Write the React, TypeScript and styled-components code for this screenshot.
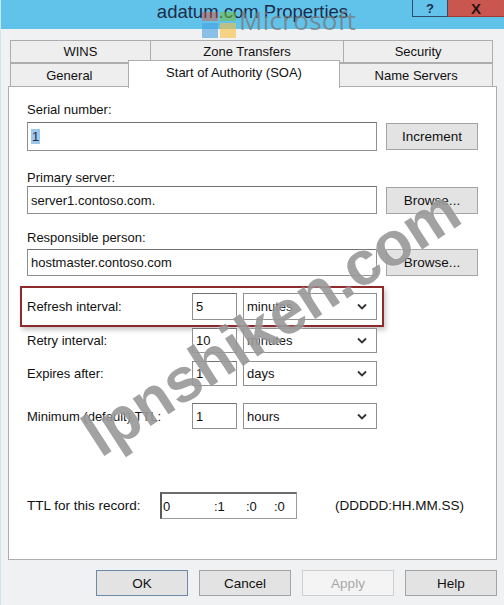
import React from "react";
import styled, { createGlobalStyle } from "styled-components";

const GlobalStyle = createGlobalStyle`
  html, body {
    margin: 0;
    padding: 0;
    background: #eff1f3;
  }
  body {
    font-family: "Liberation Sans", Arial, sans-serif;
    font-size: 13px;
    color: #111;
  }
`;

const Window = styled.div`
  position: relative;
  width: 504px;
  height: 605px;
  overflow: hidden;
  background: #eff1f3;
  border-left: 1px solid #cfe6f2;
  box-sizing: border-box;
`;

const TitleBar = styled.div`
  display: grid;
  grid-template-columns: 1fr auto 1fr;
  height: 29px;
  background: #62c3ea;
`;

const Title = styled.div`
  grid-column: 2;
  padding-top: 1px;
  font-size: 18.5px;
  line-height: 22px;
  color: #1c2d4a;
  white-space: nowrap;
`;

const Caption = styled.div`
  grid-column: 3;
  justify-self: end;
  display: flex;
  height: 17px;
`;

const CaptionButton = styled.div<{ $close?: boolean }>`
  width: ${(p) => (p.$close ? 56 : 34)}px;
  display: flex;
  align-items: center;
  justify-content: center;
  background: ${(p) => (p.$close ? "#c9574f" : "#63c3ea")};
  border-left: 1px solid #2d4d6f;
  border-bottom: 1px solid ${(p) => (p.$close ? "#9c3b35" : "#2d4d6f")};
  font-weight: bold;
  font-size: ${(p) => (p.$close ? 15 : 13)}px;
  color: ${(p) => (p.$close ? "#2a1212" : "#1c2d4a")};
  line-height: 1;
`;

const Body = styled.div`
  display: flex;
  flex-direction: column;
  padding: 11px 0 0 7px;
`;

const TabStrip = styled.div`
  display: flex;
  flex-direction: column;
  margin-left: 2px;
  width: 483px;
`;

const TabRow = styled.div<{ $h: number }>`
  display: flex;
  height: ${(p) => p.$h}px;
`;

const Tab = styled.div<{ $w: number; $active?: boolean }>`
  position: relative;
  z-index: ${(p) => (p.$active ? 2 : 1)};
  box-sizing: border-box;
  width: ${(p) => p.$w}px;
  height: ${(p) => (p.$active ? "calc(100% + 4px)" : "100%")};
  margin-top: ${(p) => (p.$active ? -3 : 0)}px;
  margin-left: -1px;
  display: flex;
  align-items: center;
  justify-content: center;
  padding-bottom: ${(p) => (p.$active ? 5 : 0)}px;
  border: 1px solid #adadad;
  border-bottom: ${(p) => (p.$active ? "none" : "1px solid #adadad")};
  background: ${(p) => (p.$active ? "#ffffff" : "#eeeeee")};
  font-size: 13px;
  color: #111;
  &:first-child {
    margin-left: 0;
  }
`;

const Panel = styled.div`
  box-sizing: border-box;
  width: 489px;
  height: 474px;
  margin-top: -1px;
  background: #ffffff;
  border: 1px solid #adadad;
  display: flex;
  flex-direction: column;
  padding: 14px 0 0 18px;
`;

const Label = styled.div<{ $mt?: number }>`
  margin-top: ${(p) => p.$mt ?? 0}px;
  line-height: 17px;
  height: 17px;
`;

const FieldRow = styled.div<{ $mt?: number }>`
  display: flex;
  align-items: center;
  gap: 9px;
  margin-top: ${(p) => p.$mt ?? 0}px;
`;

const TextBox = styled.div<{ $w: number; $h: number }>`
  box-sizing: border-box;
  width: ${(p) => p.$w}px;
  height: ${(p) => p.$h}px;
  display: flex;
  align-items: center;
  padding-left: 3px;
  background: #fff;
  border: 1px solid #8f8f8f;
  border-top-color: #707070;
  white-space: nowrap;
`;

const Selected = styled.span`
  background: #9ec8ea;
  color: #1a2c4a;
  padding: 0 1px;
`;

const Button = styled.div<{ $w: number; $h: number; $default?: boolean; $disabled?: boolean }>`
  box-sizing: border-box;
  width: ${(p) => p.$w}px;
  height: ${(p) => p.$h}px;
  display: flex;
  align-items: center;
  justify-content: center;
  background: ${(p) => (p.$disabled ? "#f4f4f4" : "#e3e3e3")};
  border: 1px solid ${(p) => (p.$default ? "#6c8aa6" : p.$disabled ? "#cfcfcf" : "#a4a4a4")};
  color: ${(p) => (p.$disabled ? "#a8a8a8" : "#111")};
  font-size: 13.5px;
`;

const Highlight = styled.div`
  box-sizing: border-box;
  width: 364px;
  height: 41px;
  margin: 10px 0 0 -7px;
  padding: 5px 0 0 5px;
  border: 2px solid #8e2a2e;
  box-shadow: 2px 3px 5px rgba(0, 0, 0, 0.22);
`;

const IntervalRow = styled.div<{ $mt?: number; $h: number }>`
  display: flex;
  align-items: center;
  height: ${(p) => p.$h}px;
  margin-top: ${(p) => p.$mt ?? 0}px;
`;

const IntervalLabel = styled.div`
  width: 165px;
`;

const Combo = styled.div<{ $h: number }>`
  box-sizing: border-box;
  width: 134px;
  height: ${(p) => p.$h}px;
  margin-left: 6px;
  display: flex;
  align-items: center;
  justify-content: space-between;
  padding: 0 9px 0 3px;
  background: #fff;
  border: 1px solid #8f8f8f;
`;

const TtlRow = styled.div`
  display: flex;
  align-items: center;
  margin-top: 63px;
  height: 27px;
`;

const TtlLabel = styled.div`
  width: 133px;
  font-size: 13.5px;
`;

const TtlBox = styled.div`
  box-sizing: border-box;
  width: 137px;
  height: 27px;
  display: flex;
  align-items: center;
  background: #fff;
  border: 1px solid #9a9a9a;
  border-top: 2px solid #6d6d6d;
  border-left: 2px solid #5a5a5a;
`;

const TtlPart = styled.span<{ $w: number }>`
  width: ${(p) => p.$w}px;
  padding-left: 1px;
`;

const Format = styled.div`
  margin-left: 38px;
  font-size: 13.5px;
`;

const ButtonBar = styled.div`
  display: flex;
  justify-content: flex-end;
  gap: 11px;
  width: 489px;
  margin-top: 10px;
`;

const MsMark = styled.div`
  position: absolute;
  left: 201px;
  top: 3px;
  display: flex;
  align-items: flex-start;
  gap: 3px;
  pointer-events: none;
`;

const MsLogo = styled.div`
  display: grid;
  grid-template-columns: 16px 16px;
  grid-template-rows: 9px 15px;
  gap: 2px;
  margin-top: 9px;
`;

const MsSquare = styled.div<{ $c: string }>`
  background: ${(p) => p.$c};
`;

const MsText = styled.div`
  margin-top: 2px;
  font-family: "Open Sans", "Liberation Sans", sans-serif;
  font-size: 26px;
  line-height: 30px;
  color: rgba(120, 120, 120, 0.75);
  letter-spacing: 0.3px;
`;

const Stamp = styled.div`
  position: absolute;
  left: 270px;
  top: 322px;
  transform: translate(-50%, -50%) rotate(-33deg);
  font-family: "Liberation Sans", Arial, sans-serif;
  font-weight: bold;
  font-size: 62px;
  color: rgba(105, 105, 105, 0.62);
  white-space: nowrap;
  pointer-events: none;
  text-shadow: 0 0 2px rgba(255, 255, 255, 0.8);
`;

const Chevron = () => (
  <svg width="10" height="7" viewBox="0 0 10 7">
    <polyline points="1,1.5 5,5.5 9,1.5" fill="none" stroke="#333" strokeWidth="1.8" />
  </svg>
);

const intervals = [
  { label: "Retry interval:", value: "10", unit: "minutes", mt: 1, h: 25 },
  { label: "Expires after:", value: "1", unit: "days", mt: 8, h: 25 },
  { label: "Minimum (default) TTL:", value: "1", unit: "hours", mt: 17, h: 26 },
];

const App = () => {
  return (
    <>
      <GlobalStyle />
      <Window>
        <TitleBar>
          <Title>adatum.com Properties</Title>
          <Caption>
            <CaptionButton>?</CaptionButton>
            <CaptionButton $close>X</CaptionButton>
          </Caption>
        </TitleBar>

        <Body>
          <TabStrip>
            <TabRow $h={23}>
              <Tab $w={141}>WINS</Tab>
              <Tab $w={195}>Zone Transfers</Tab>
              <Tab $w={150}>Security</Tab>
            </TabRow>
            <TabRow $h={24}>
              <Tab $w={119}>General</Tab>
              <Tab $w={213} $active>Start of Authority (SOA)</Tab>
              <Tab $w={154}>Name Servers</Tab>
            </TabRow>
          </TabStrip>

          <Panel>
            <Label>Serial number:</Label>
            <FieldRow $mt={4}>
              <TextBox $w={350} $h={29}>
                <Selected>1</Selected>
              </TextBox>
              <Button $w={92} $h={27}>Increment</Button>
            </FieldRow>

            <Label $mt={18}>Primary server:</Label>
            <FieldRow>
              <TextBox $w={350} $h={28}>server1.contoso.com.</TextBox>
              <Button $w={92} $h={27}>Browse...</Button>
            </FieldRow>

            <Label $mt={15}>Responsible person:</Label>
            <FieldRow $mt={3}>
              <TextBox $w={350} $h={27}>hostmaster.contoso.com</TextBox>
              <Button $w={92} $h={27}>Browse...</Button>
            </FieldRow>

            <Highlight>
              <IntervalRow $h={27}>
                <IntervalLabel>Refresh interval:</IntervalLabel>
                <TextBox $w={45} $h={27}>5</TextBox>
                <Combo $h={27}>
                  minutes
                  <Chevron />
                </Combo>
              </IntervalRow>
            </Highlight>

            {intervals.map((row) => (
              <IntervalRow key={row.label} $mt={row.mt} $h={row.h}>
                <IntervalLabel>{row.label}</IntervalLabel>
                <TextBox $w={45} $h={row.h}>{row.value}</TextBox>
                <Combo $h={row.h}>
                  {row.unit}
                  <Chevron />
                </Combo>
              </IntervalRow>
            ))}

            <TtlRow>
              <TtlLabel>TTL for this record:</TtlLabel>
              <TtlBox>
                <TtlPart $w={50}>0</TtlPart>
                <TtlPart $w={31}>:1</TtlPart>
                <TtlPart $w={27}>:0</TtlPart>
                <TtlPart $w={20}>:0</TtlPart>
              </TtlBox>
              <Format>(DDDDD:HH.MM.SS)</Format>
            </TtlRow>
          </Panel>

          <ButtonBar>
            <Button $w={92} $h={26} $default>OK</Button>
            <Button $w={92} $h={26}>Cancel</Button>
            <Button $w={92} $h={26} $disabled>Apply</Button>
            <Button $w={92} $h={26}>Help</Button>
          </ButtonBar>
        </Body>

        <MsMark>
          <MsLogo>
            <MsSquare $c="rgba(226, 80, 60, 0.45)" />
            <MsSquare $c="rgba(120, 190, 60, 0.55)" />
            <MsSquare $c="rgba(70, 160, 225, 0.6)" />
            <MsSquare $c="rgba(250, 190, 60, 0.6)" />
          </MsLogo>
          <MsText>Microsoft</MsText>
        </MsMark>

        <Stamp>lpnshiken.com</Stamp>
      </Window>
    </>
  );
};

export default App;
